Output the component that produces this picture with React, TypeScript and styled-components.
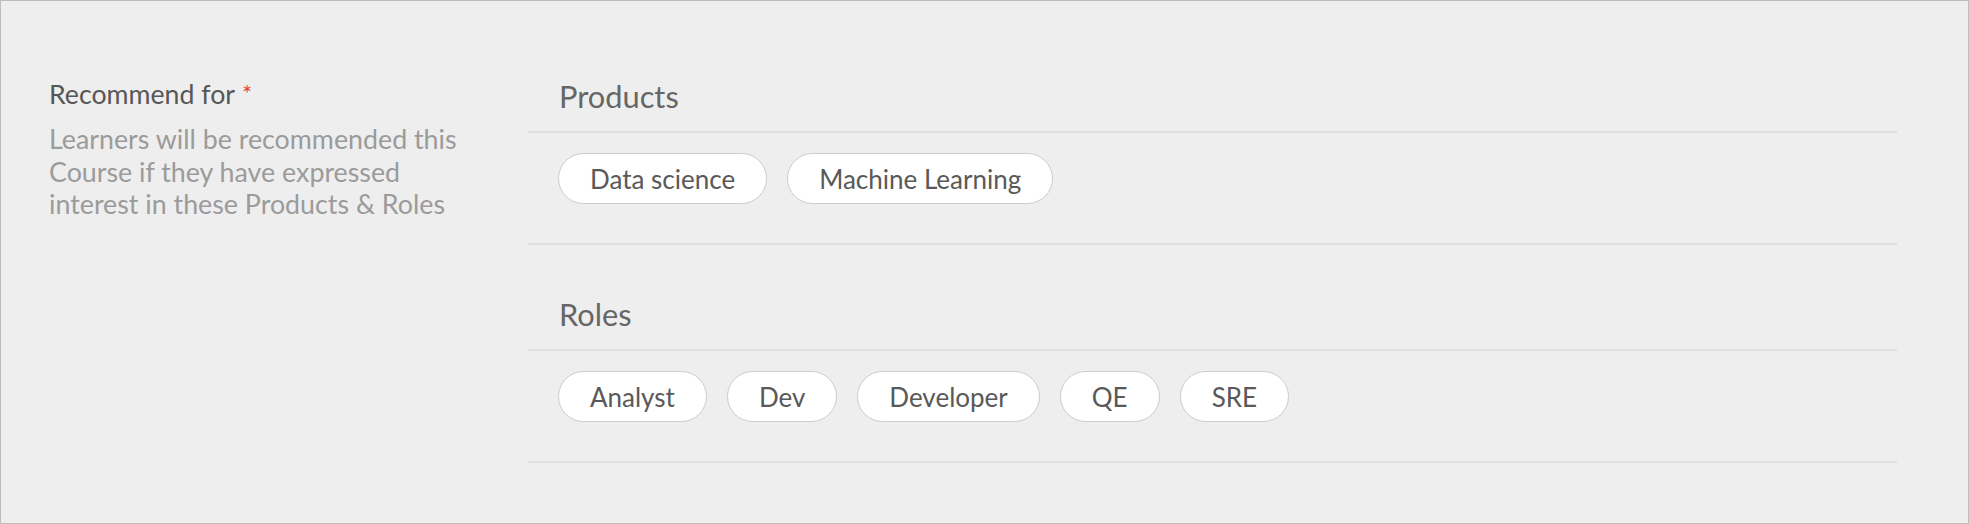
import React from 'react';
import styled, { createGlobalStyle } from 'styled-components';

const GlobalStyle = createGlobalStyle`
  html, body {
    margin: 0;
    padding: 0;
    background: #eeeeee;
  }
  body {
    font-family: Lato, "Noto Sans", sans-serif;
  }
  *, *::before, *::after {
    box-sizing: border-box;
  }
`;

const Panel = styled.section`
  width: 1969px;
  height: 524px;
  border: 1px solid #bdbdbd;
  background: #eeeeee;
  display: grid;
  grid-template-columns: 479px 1369px;
  align-items: start;
  padding: 75px 0 0 48px;
`;

const Intro = styled.div`
  display: flex;
  flex-direction: column;
`;

const Label = styled.div`
  font-size: 26.7px;
  line-height: 33px;
  color: #575757;
`;

const Required = styled.span`
  color: #e5453a;
  font-size: 24px;
  vertical-align: 2px;
  margin-left: 7px;
`;

const Hint = styled.p`
  margin: 12px 0 0;
  max-width: 440px;
  font-size: 26.8px;
  line-height: 32.5px;
  color: #9b9b9b;
`;

const Groups = styled.div`
  display: flex;
  flex-direction: column;
  gap: 49px;
`;

const Group = styled.div`
  display: flex;
  flex-direction: column;
`;

const GroupTitle = styled.h3`
  margin: 0;
  padding: 3px 0 16px 31px;
  font-size: 30.8px;
  line-height: 36px;
  font-weight: 400;
  color: #666666;
  border-bottom: 2px solid #dedede;
`;

const ChipRow = styled.div`
  display: flex;
  flex-wrap: wrap;
  gap: 20px;
  padding: 20px 0 39px 30px;
  border-bottom: 2px solid #dedede;
`;

const Chip = styled.span`
  display: inline-flex;
  align-items: center;
  height: 51px;
  padding: 0 31px;
  border: 1px solid #cccccc;
  border-radius: 26px;
  background: #ffffff;
  font-size: 26px;
  color: #595959;
  white-space: nowrap;
`;

const groups = [
  { title: 'Products', items: ['Data science', 'Machine Learning'] },
  { title: 'Roles', items: ['Analyst', 'Dev', 'Developer', 'QE', 'SRE'] },
];

export default function App() {
  return (
    <>
      <GlobalStyle />
      <Panel>
        <Intro>
          <Label>
            Recommend for<Required>*</Required>
          </Label>
          <Hint>
            Learners will be recommended this Course if they have expressed interest in these Products &amp; Roles
          </Hint>
        </Intro>
        <Groups>
          {groups.map((g) => (
            <Group key={g.title}>
              <GroupTitle>{g.title}</GroupTitle>
              <ChipRow>
                {g.items.map((item) => (
                  <Chip key={item}>{item}</Chip>
                ))}
              </ChipRow>
            </Group>
          ))}
        </Groups>
      </Panel>
    </>
  );
}
